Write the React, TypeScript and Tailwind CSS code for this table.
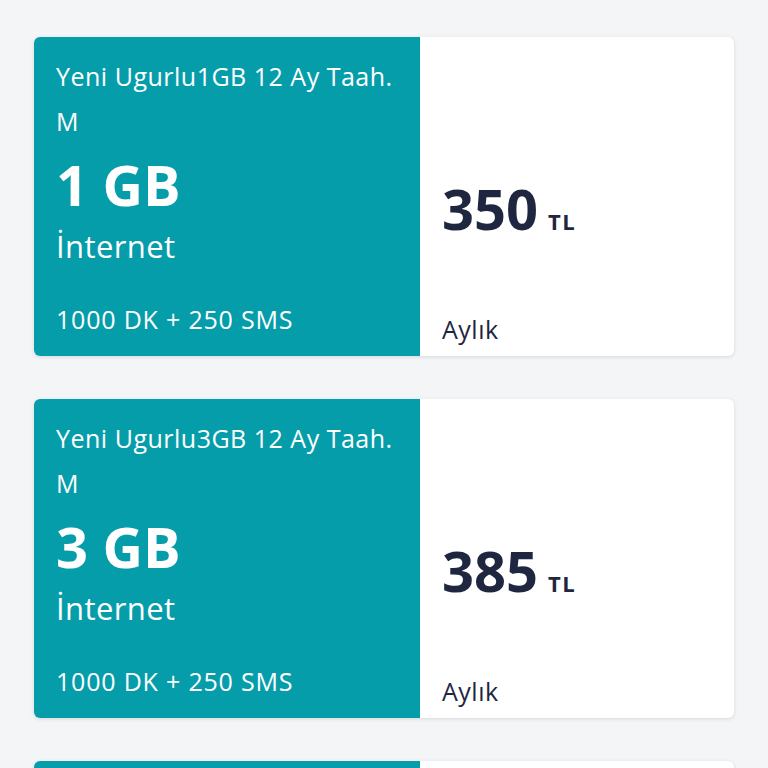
const plans = [
  { name: 'Yeni Ugurlu1GB 12 Ay Taah. M', gb: '1 GB', price: '350' },
  { name: 'Yeni Ugurlu3GB 12 Ay Taah. M', gb: '3 GB', price: '385' },
  { name: 'Yeni Ugurlu5GB 12 Ay Taah. M', gb: '5 GB', price: '420' },
]

function PlanCard({ name, gb, price }: { name: string; gb: string; price: string }) {
  return (
    <div className="flex h-[319px] w-[700px] shrink-0 overflow-hidden rounded-[6px] bg-white shadow-[0_1px_4px_rgba(0,0,0,0.12)]">
      {/* Package summary */}
      <div className="flex w-[386px] flex-col bg-[#069dab] pl-[22px] pt-[17px] text-white">
        <div className="w-[345px] text-[25px] leading-[45px] tracking-[0.5px]">{name}</div>
        <div className="mt-[12px] text-[56px] font-bold leading-[56px]">{gb}</div>
        <div className="mt-[16px] text-[31px] leading-[36px] tracking-[0.4px]">İnternet</div>
        <div className="mt-[40px] text-[25px] leading-[30px] tracking-[0.8px]">1000 DK + 250 SMS</div>
      </div>

      {/* Price */}
      <div className="flex flex-1 flex-col px-[22px] text-[#1f2640]">
        <div className="mt-[141px] flex items-baseline gap-[10px]">
          <span className="text-[56px] font-bold leading-[60px]">{price}</span>
          <span className="text-[22px] font-bold tracking-[1.5px]">TL</span>
        </div>
        <div className="mt-[76px] text-[25px] leading-[30px] tracking-[0.5px]">Aylık</div>
      </div>
    </div>
  )
}

export default function App() {
  return (
    <div className="flex h-[768px] w-[768px] flex-col items-center gap-[43px] overflow-hidden bg-[#f4f5f7] pt-[37px] font-['Open_Sans','Noto_Sans',sans-serif]">
      {plans.map((p) => (
        <PlanCard key={p.price} {...p} />
      ))}
    </div>
  )
}
